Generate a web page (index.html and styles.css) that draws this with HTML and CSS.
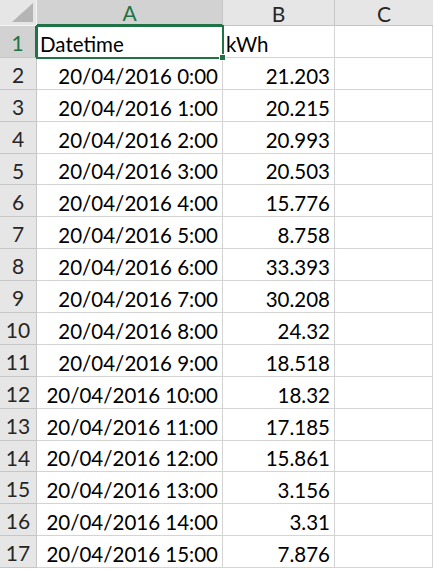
FILE: index.html
```html
<!DOCTYPE html>
<html>
<head>
<meta charset="utf-8">
<link rel="stylesheet" href="styles.css">
</head>
<body>
<div class="sheet">
  <div class="corner"><div class="tri"></div></div>
  <div class="ch sel-col">A</div>
  <div class="ch">B</div>
  <div class="ch last">C</div>

  <div class="rh sel-row">1</div>
  <div class="c txt a1">Datetime<span class="handle"></span></div>
  <div class="c txt">kWh</div>
  <div class="c"></div>

  <div class="rh">2</div><div class="c num">20/04/2016 0:00</div><div class="c num">21.203</div><div class="c"></div>
  <div class="rh">3</div><div class="c num">20/04/2016 1:00</div><div class="c num">20.215</div><div class="c"></div>
  <div class="rh">4</div><div class="c num">20/04/2016 2:00</div><div class="c num">20.993</div><div class="c"></div>
  <div class="rh">5</div><div class="c num">20/04/2016 3:00</div><div class="c num">20.503</div><div class="c"></div>
  <div class="rh">6</div><div class="c num">20/04/2016 4:00</div><div class="c num">15.776</div><div class="c"></div>
  <div class="rh">7</div><div class="c num">20/04/2016 5:00</div><div class="c num">8.758</div><div class="c"></div>
  <div class="rh">8</div><div class="c num">20/04/2016 6:00</div><div class="c num">33.393</div><div class="c"></div>
  <div class="rh">9</div><div class="c num">20/04/2016 7:00</div><div class="c num">30.208</div><div class="c"></div>
  <div class="rh">10</div><div class="c num">20/04/2016 8:00</div><div class="c num">24.32</div><div class="c"></div>
  <div class="rh">11</div><div class="c num">20/04/2016 9:00</div><div class="c num">18.518</div><div class="c"></div>
  <div class="rh">12</div><div class="c num">20/04/2016 10:00</div><div class="c num">18.32</div><div class="c"></div>
  <div class="rh">13</div><div class="c num">20/04/2016 11:00</div><div class="c num">17.185</div><div class="c"></div>
  <div class="rh">14</div><div class="c num">20/04/2016 12:00</div><div class="c num">15.861</div><div class="c"></div>
  <div class="rh">15</div><div class="c num">20/04/2016 13:00</div><div class="c num">3.156</div><div class="c"></div>
  <div class="rh">16</div><div class="c num">20/04/2016 14:00</div><div class="c num">3.31</div><div class="c"></div>
  <div class="rh">17</div><div class="c num">20/04/2016 15:00</div><div class="c num">7.876</div><div class="c"></div>
</div>
</body>
</html>
```

FILE: styles.css
```css
html, body {
  margin: 0;
  padding: 0;
  background: #ffffff;
  overflow: hidden;
}
.sheet {
  display: grid;
  grid-template-columns: 37px 186px 112px 98px;
  grid-auto-rows: 31.9px;
  grid-template-rows: 26px;
  font-family: Lato, "Open Sans", sans-serif;
  font-size: 20.5px;
  color: #000;
  width: 433px;
}
.corner {
  background: #e6e6e6;
  border-right: 1px solid #f4f4f4;
  border-bottom: 1px solid #f4f4f4;
  box-sizing: border-box;
  position: relative;
}
.tri {
  position: absolute;
  right: 3px;
  bottom: 3px;
  width: 0;
  height: 0;
  border-left: 21px solid transparent;
  border-bottom: 19px solid #b5b5b5;
}
.ch {
  background: #e6e6e6;
  border-right: 1px solid #c6c6c6;
  border-bottom: 1px solid #c6c6c6;
  box-sizing: border-box;
  display: flex;
  align-items: center;
  justify-content: center;
  color: #262626;
  font-size: 21px;
  padding-top: 1px;
}
.ch.last {
  border-right: none;
}
.sel-col {
  background: #d2d2d2;
  color: #217346;
  border-bottom: 2px solid #217346;
}
.rh {
  background: #e6e6e6;
  border-right: 1px solid #c6c6c6;
  border-bottom: 1px solid #c6c6c6;
  box-sizing: border-box;
  display: flex;
  align-items: center;
  justify-content: center;
  color: #262626;
  font-size: 21px;
  padding-top: 2px;
}
.sel-row {
  background: #d2d2d2;
  color: #217346;
  border-right: 2px solid #217346;
}
.c {
  border-right: 1px solid #d4d4d4;
  border-bottom: 1px solid #d4d4d4;
  box-sizing: border-box;
  display: flex;
  align-items: flex-end;
  padding: 0 4px 1px 3px;
  white-space: nowrap;
  overflow: visible;
  position: relative;
}
.num {
  justify-content: flex-end;
}
.txt {
  justify-content: flex-start;
}
.a1 {
  outline: 2px solid #217346;
  outline-offset: -1px;
  z-index: 2;
}
.handle {
  position: absolute;
  right: -4px;
  bottom: -4px;
  width: 5px;
  height: 5px;
  background: #217346;
  border: 1px solid #ffffff;
}
```
